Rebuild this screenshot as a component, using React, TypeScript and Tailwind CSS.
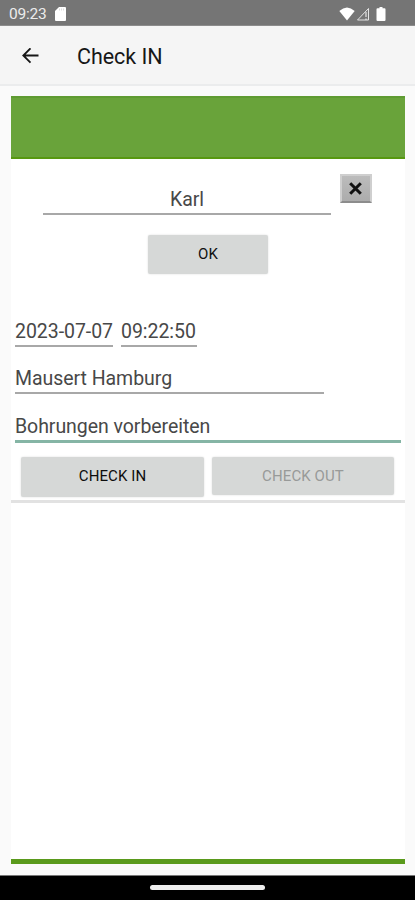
import type { ReactNode } from 'react';

function StatusBar() {
  return (
    <div className="flex h-[26px] items-center border-b border-[#8c8c8c] bg-[#757575] pl-[9px] pr-[28px] pt-[2px] text-white">
      <span className="w-[46px] pt-[2px] text-[15.5px] leading-none tracking-[-0.2px] text-[#ececec]">09:23</span>
      <svg className="h-[14px] w-[11px]" viewBox="0 0 11 14" fill="currentColor">
        <path d="M4 0h6a1 1 0 0 1 1 1v12a1 1 0 0 1-1 1H1a1 1 0 0 1-1-1V4z" />
        <path d="M4.500 1.500v2M6.500 1.500v2M8.500 1.500v2" stroke="#d0d0d0" strokeWidth=".7" />
      </svg>
      <svg className="ml-auto h-[14px] w-[48px]" viewBox="0 0 48 14" fill="currentColor">
        <path d="M.3 4Q8 -3 15.700 4L8 13.500z" />
        <path d="M18.500 13 29.500 1.500V13z" fill="none" stroke="#e4e4e4" strokeWidth="1" />
        <path d="M27 5v5M27 11.500v1.500" stroke="#e4e4e4" strokeWidth="1.200" />
        <path d="M40.500 0h3v1.200h2a1 1 0 0 1 1 1V13a1 1 0 0 1-1 1h-7a1 1 0 0 1-1-1V2.200a1 1 0 0 1 1-1h2z" />
      </svg>
    </div>
  );
}

function Field({ className, children }: { className: string; children: ReactNode }) {
  return (
    <div className={`flex items-center whitespace-nowrap border-b-2 border-[#a8a8a8] text-[19.5px] font-normal leading-none tracking-[-0.05px] text-[#484848] ${className}`}>
      {children}
    </div>
  );
}

function Button({ className, children }: { className: string; children: ReactNode }) {
  return (
    <button className={`flex items-center justify-center rounded-[2px] bg-[#d6d8d7] text-[15px] leading-none tracking-[0.1px] shadow-[0_0_2px_rgba(0,0,0,0.15)] ${className}`}>
      {children}
    </button>
  );
}

export default function App() {
  return (
    <div className="flex h-[900px] w-[415px] flex-col overflow-hidden bg-[#fafafa] font-['Roboto',sans-serif]">
      <StatusBar />
      <header className="flex h-[60px] items-center border-b-2 border-[#ebeced] bg-[#f5f5f5] pl-[22px] pt-[2px]">
        <svg className="h-[16px] w-[17px]" viewBox="0 0 17 16" fill="none" stroke="#171717" strokeWidth="1.800">
          <path d="M16.500 7.500H1.500M8.500 .3 1.300 7.500l7.200 7.200" />
        </svg>
        <h1 className="ml-[38px] mt-[1px] text-[21.5px] font-normal leading-none tracking-[-0.05px] text-[#171717]">Check IN</h1>
      </header>

      <main className="ml-[11px] mt-[10px] flex h-[768px] w-[394px] flex-col border-b-[5px] border-[#5a9a1c] bg-white">
        <div className="h-[63px] shrink-0 border-y-2 border-t-[#5f9b32] border-b-[#579810] bg-[#69a33a]" />

        <div className="flex h-[56px] shrink-0 items-start pl-[32px]">
          <Field className="mt-[27px] h-[29px] w-[288px] justify-center">Karl</Field>
          <button className="ml-[9px] mt-[15px] flex h-[29px] w-[32px] items-center justify-center border-2 border-[#cfcfcf] border-b-[#8c8c8c] bg-linear-to-b from-[#bcbcbc] to-[#acacac]">
            <svg className="mr-[1px] h-[13px] w-[13px]" viewBox="0 0 13 13" stroke="#111" strokeWidth="3">
              <path d="M1.200 1.200 11.800 11.800M11.800 1.200 1.200 11.800" />
            </svg>
          </button>
        </div>

        <Button className="ml-[137px] mt-[20px] h-[39px] w-[120px] shrink-0 text-[#111]">OK</Button>

        <div className="ml-[4px] mt-[45px] flex shrink-0 gap-[8px]">
          <Field className="h-[28px] w-[98px] pb-[1px]">2023-07-07</Field>
          <Field className="h-[28px] w-[76px] pb-[1px]">09:22:50</Field>
        </div>
        <Field className="ml-[4px] mt-[19px] h-[28px] w-[309px] shrink-0">Mausert Hamburg</Field>
        <div className="ml-[4px] mt-[19px] flex h-[30px] w-[386px] shrink-0 items-center border-b-[3px] border-[#85b5a5] text-[19.5px] leading-none tracking-[-0.05px] text-[#484848]">
          Bohrungen vorbereiten
        </div>

        <div className="flex h-[60px] shrink-0 items-start gap-[8px] border-b-[3px] border-[#e2e2e2] pl-[10px] pt-[14px]">
          <Button className="h-[40px] w-[183px] pb-[2px] text-[#0d0d0d]">CHECK IN</Button>
          <Button className="h-[38px] w-[182px] text-[#989a99]">CHECK OUT</Button>
        </div>
      </main>

      <nav className="mt-auto flex h-[25px] justify-center border-t border-[#777] bg-black pt-[9px]">
        <div className="h-[5px] w-[115px] rounded-full bg-[#eee]" />
      </nav>
    </div>
  );
}
